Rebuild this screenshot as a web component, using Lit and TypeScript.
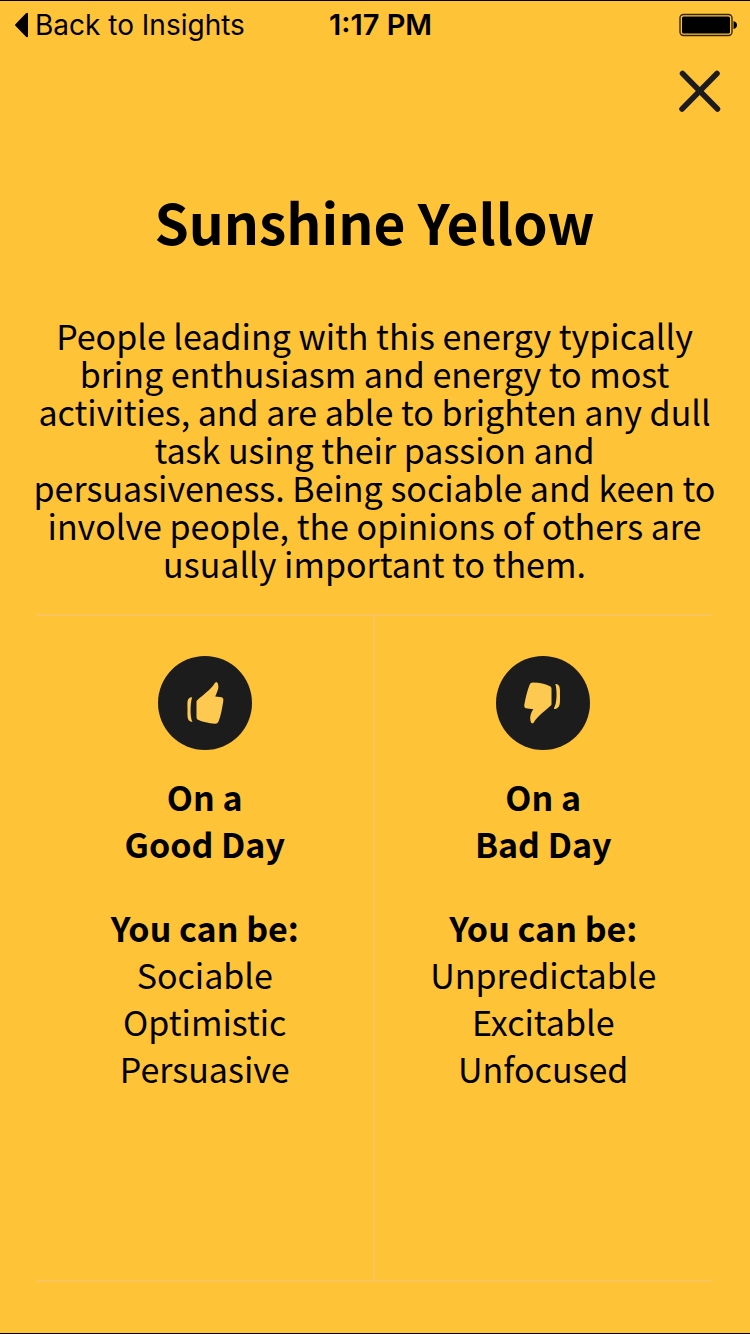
import { LitElement, html, css, svg } from "lit";
import { customElement, property } from "lit/decorators.js";

@customElement("status-bar")
class StatusBar extends LitElement {
  static styles = css`
    :host {
      display: grid;
      grid-template-columns: 1fr auto 1fr;
      align-items: center;
      height: 48px;
      padding: 0 13px 0 14px;
      font: 400 28px/48px Inter, "Liberation Sans", sans-serif;
      color: #000;
    }
    .back {
      display: flex;
      align-items: center;
      gap: 7px;
      color: inherit;
      text-decoration: none;
      white-space: nowrap;
    }
    .time {
      padding-left: 10px;
      font-size: 29px;
      font-weight: 600;
    }
    .battery {
      justify-self: end;
    }
    svg {
      display: block;
    }
  `;

  render() {
    return html`
      <a class="back" href="#insights">
        <svg width="14" height="26" viewBox="0 0 14 26" aria-hidden="true">
          <path d="M1.4 12.2 12 1.3Q14 0 14 2V24Q14 26 12 24.7L1.4 13.8Q.6 13 1.4 12.2Z" />
        </svg>
        <span>Back to Insights</span>
      </a>
      <span class="time">1:17 PM</span>
      <svg class="battery" width="58" height="24" viewBox="0 0 58 24" role="img" aria-label="Battery full">
        <rect x="1" y="1.500" width="52" height="21" rx="3.5" fill="none" stroke="#000" stroke-opacity=".8" stroke-width="1.4" />
        <rect x="3" y="3.500" width="48" height="17" rx="1.5" />
        <path d="M54.5 8Q58 9 58 12T54.500 16Z" />
      </svg>
    `;
  }
}

@customElement("day-card")
class DayCard extends LitElement {
  @property() day = "";
  @property() thumb: "up" | "down" = "up";
  @property({ attribute: false }) traits: string[] = [];

  static styles = css`
    :host {
      display: flex;
      flex-direction: column;
      align-items: center;
      padding: 40px 8px 32px;
      text-align: center;
      font-size: 34px;
      line-height: 47px;
    }
    svg {
      display: block;
      width: 94px;
      height: 94px;
    }
    h2,
    h3 {
      margin: 0;
      font-size: inherit;
      font-weight: 700;
    }
    h2 {
      margin-top: 23px;
    }
    h3 {
      margin-top: 37px;
    }
    ul {
      margin: 0;
      padding: 0;
      list-style: none;
    }
  `;

  render() {
    const up = svg`
      <path d="M34.200 41.200C28.500 41.500 29.500 46 29.500 53S28.500 65.500 34.500 66C31.800 61 32.200 47 34.200 41.200Z" />
      <path d="M39 44.500C44 39.500 52.500 34 56.500 27.500Q58.500 24.500 59.800 27.500C61.500 32 59 36 57.300 40.500L63.500 41.300Q65.800 42 65.300 45C64.300 51.500 63 59.500 60.500 65.500Q59.700 67.800 57 67.700C50.500 67.200 44.500 66 39.500 63.500Q38.500 62.800 38.500 61V46Q38.500 45 39 44.500Z" />`;
    const down = svg`
      <path d="M59.300 28C64.500 27.800 64 33 64 40S64.500 52 59 53Q57.500 53.200 58 52C61 48 61.300 34 59.300 28Z" />
      <path d="M54.800 49.500C50 54 41.500 60 37.800 66.500Q35.500 69 34.500 65C33.500 60.500 35 56.500 37.300 53.200L29.800 52.200Q28 51.800 28.200 49.500C29.200 43 31.200 35 33.700 28.500Q34.500 26.500 37 26.600C43.500 26.700 49.500 28 54.500 30.500Q55.500 31.200 55.500 33V48Q55.500 49 54.800 49.500Z" />`;
    return html`
      <svg viewBox="0 0 94 94" fill="#fec950" aria-hidden="true">
        <circle cx="47" cy="47" r="47" fill="#1c1c1c" />
        ${this.thumb === "up" ? up : down}
      </svg>
      <h2>On a<br />${this.day}</h2>
      <h3>You can be:</h3>
      <ul>
        ${this.traits.map((t) => html`<li>${t}</li>`)}
      </ul>
    `;
  }
}

@customElement("app-root")
class AppRoot extends LitElement {
  static styles = css`
    :host {
      display: flex;
      flex-direction: column;
      box-sizing: border-box;
      min-height: 100vh;
      border: solid #000;
      border-width: 1px 0;
      background: #fec336;
      color: #000;
      font-family: "Noto Sans CJK SC", "Noto Sans", sans-serif;
    }
    .toolbar {
      display: flex;
      justify-content: flex-end;
      padding: 20px 28px 0;
    }
    .close {
      display: block;
      padding: 0;
      border: 0;
      background: none;
      cursor: pointer;
    }
    .close svg {
      display: block;
    }
    main {
      flex: 1;
      display: flex;
      flex-direction: column;
      padding: 0 38px 51px 37px;
    }
    h1 {
      margin: 68px 0 0;
      font-size: 55px;
      line-height: 80px;
      font-weight: 700;
      text-align: center;
    }
    p {
      margin: 56px -8px 31px;
      font-size: 34px;
      line-height: 38px;
      text-align: center;
    }
    .days {
      flex: 1;
      display: grid;
      grid-template-columns: 1fr 1fr;
      border: solid #fcc45c;
      border-width: 2px 0;
    }
    .days > :first-child {
      border-right: 2px solid #fcc45c;
    }
  `;

  render() {
    return html`
      <status-bar></status-bar>
      <div class="toolbar">
        <button class="close" aria-label="Close">
          <svg width="44" height="44" viewBox="0 0 44 44" fill="none" stroke="#1c1c1c" stroke-width="5.500" stroke-linecap="round" aria-hidden="true">
            <path d="M4.500 4.500 39.500 40M39 4.500 4 40" />
          </svg>
        </button>
      </div>
      <main>
        <h1>Sunshine Yellow</h1>
        <p>
          People leading with this energy typically bring enthusiasm and energy to most activities, and are able to
          brighten any dull task using their passion and persuasiveness. Being sociable and keen to involve people, the
          opinions of others are usually important to them.
        </p>
        <section class="days">
          <day-card day="Good Day" thumb="up" .traits=${["Sociable", "Optimistic", "Persuasive"]}></day-card>
          <day-card day="Bad Day" thumb="down" .traits=${["Unpredictable", "Excitable", "Unfocused"]}></day-card>
        </section>
      </main>
    `;
  }
}
